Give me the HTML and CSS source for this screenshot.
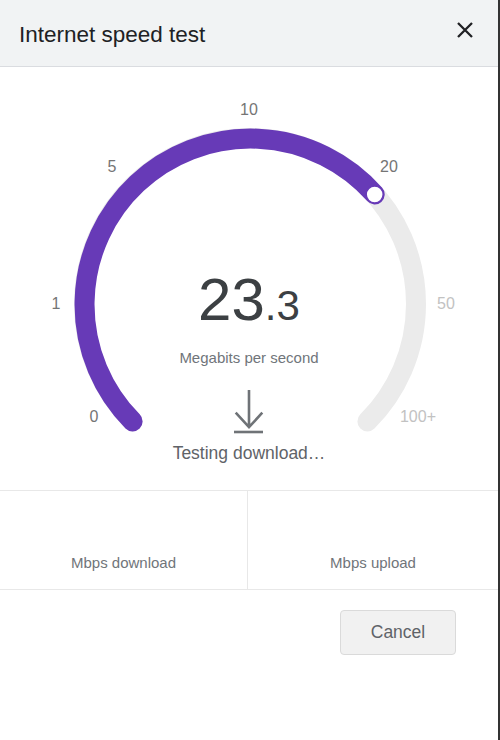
FILE: index.html
```html
<!DOCTYPE html>
<html lang="en">
<head>
    <meta charset="UTF-8">
    <meta name="viewport" content="width=device-width, initial-scale=1.0">
    <title>Internet speed test</title>
    <link rel="stylesheet" href="styles.css">
</head>
<body>
    <div class="dialog">
        <div class="header">
            <h1 class="title">Internet speed test</h1>
            <svg class="close" width="16" height="16" viewBox="0 0 16 16">
                <path d="M1 1 L15 15 M15 1 L1 15" />
            </svg>
        </div>

        <div class="gauge">
            <svg class="dial" width="498" height="423" viewBox="0 0 498 423">
                <path class="track" d="M 132.6 354.4 A 166 166 0 1 1 367.4 354.4" />
                <path class="progress" d="M 132.6 354.4 A 166 166 0 1 1 374.7 127.4" />
                <circle class="knob" cx="374.7" cy="127.4" r="8.5" />

                <text class="tick" x="94" y="354.7">0</text>
                <text class="tick" x="56" y="242">1</text>
                <text class="tick" x="112" y="104.7">5</text>
                <text class="tick" x="249" y="48">10</text>
                <text class="tick" x="389" y="104.7">20</text>
                <text class="tick off" x="446" y="242">50</text>
                <text class="tick off" x="418" y="354.7">100+</text>
            </svg>

            <div class="readout">
                <div class="speed">23<small>.3</small></div>
                <div class="unit">Megabits per second</div>
                <svg class="arrow" width="30" height="44" viewBox="0 0 30 44">
                    <path d="M15 0 L15 37 M1.7 22.7 L15 37.2 L28.3 22.7" />
                    <path d="M0 42 L29 42" />
                </svg>
                <div class="status">Testing download…</div>
            </div>
        </div>

        <div class="stats">
            <div class="stat">Mbps download</div>
            <div class="stat">Mbps upload</div>
        </div>

        <div class="footer">
            <button class="cancel">Cancel</button>
        </div>
    </div>
</body>
</html>
```

FILE: styles.css
```css
body {
    font-family: "Liberation Sans", Arial, sans-serif;
    margin: 0;
    padding: 0;
    background-color: #fff;
}
.dialog {
    width: 498px;
    height: 740px;
    border-right: 2px solid #333;
}
.header {
    display: flex;
    align-items: flex-start;
    height: 66px;
    padding: 0 25px 0 19px;
    background-color: #f1f3f4;
    border-bottom: 1px solid #dadce0;
}
.title {
    margin: 22px 0 0;
    font-size: 22.5px;
    line-height: 26px;
    font-weight: normal;
    color: #202124;
}
.close {
    margin: 22px 0 0 auto;
    stroke: #202124;
    stroke-width: 2.3;
    fill: none;
}
.gauge {
    position: relative;
    height: 423px;
}
.dial {
    display: block;
}
.track,
.progress {
    fill: none;
    stroke-width: 20;
    stroke-linecap: round;
}
.track {
    stroke: #ebebeb;
}
.progress {
    stroke: #673ab7;
}
.knob {
    fill: #fff;
    stroke: #673ab7;
    stroke-width: 1.5;
}
.tick {
    font-size: 16px;
    fill: #757575;
    text-anchor: middle;
}
.tick.off {
    fill: #c2c2c2;
}
.readout {
    position: absolute;
    top: 205px;
    left: 0;
    right: 0;
    display: flex;
    flex-direction: column;
    align-items: center;
}
.speed {
    font-size: 60px;
    line-height: 56px;
    color: #3c4043;
}
.speed small {
    font-size: 42px;
    line-height: 1;
}
.unit {
    margin-top: 21px;
    font-size: 15px;
    line-height: 18px;
    color: #70757a;
}
.arrow {
    margin-top: 23px;
    stroke: #6f7377;
    stroke-width: 2.6;
    fill: none;
}
.status {
    margin-top: 9px;
    font-size: 17.5px;
    line-height: 20px;
    color: #5f6368;
}
.stats {
    display: grid;
    grid-template-columns: 248px 1fr;
    border-top: 1px solid #e8e8e8;
    border-bottom: 1px solid #e8e8e8;
}
.stat {
    display: flex;
    align-items: flex-end;
    justify-content: center;
    height: 98px;
    padding-bottom: 17px;
    box-sizing: border-box;
    font-size: 15px;
    line-height: 18px;
    color: #70757a;
}
.stat:first-child {
    border-right: 1px solid #e8e8e8;
}
.footer {
    display: flex;
    justify-content: flex-end;
    padding: 20px 42px 0 0;
}
.cancel {
    width: 116px;
    height: 45px;
    font-family: inherit;
    font-size: 17.5px;
    color: #5f6368;
    background-color: #f1f1f1;
    border: 1px solid #dadada;
    border-radius: 4px;
}
```
